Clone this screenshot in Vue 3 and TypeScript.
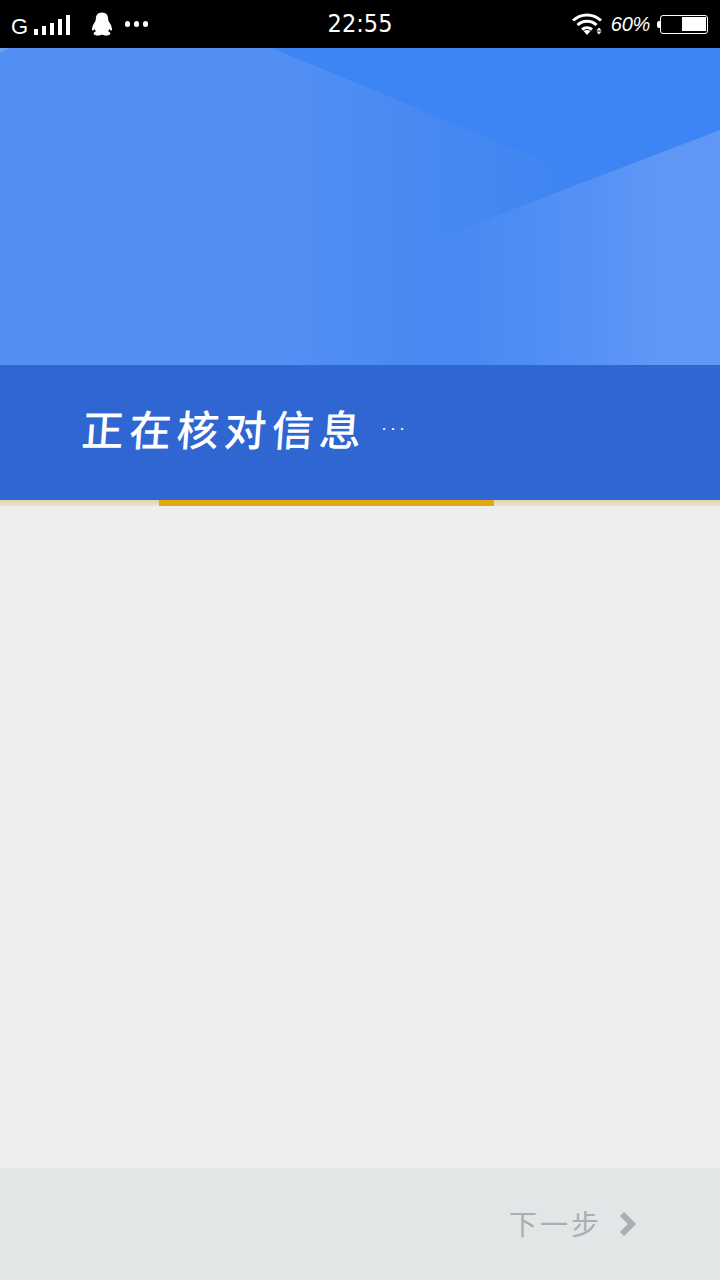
<script setup lang="ts">
const title: string = '正在核对信息'
const next: string = '下一步'
const signalBars: number[] = [6, 9, 12, 16, 20]
</script>

<template>
  <div class="page">
    <header class="status">
      <div class="status-left">
        <span class="net">G</span>
        <span class="bars">
          <i v-for="h in signalBars" :key="h" class="bar" :style="{ height: h + 'px' }"></i>
        </span>
        <svg class="qq" viewBox="0 0 22 24" width="22" height="24">
          <path fill="#fff" d="M11 .5C7 .5 4.800 3.300 4.800 7c0 1.300-.4 2.200-1.200 3.400C2.300 12.400 1 15 1 17.300c0 1.200.6 1.500 1.200 1.100.5-.3.900-.8 1.400-1.500.3.900.8 1.700 1.400 2.400C3.300 20 2.300 20.800 2.700 22c.4 1.200 3.600 1.800 5.600 1.400 1.100-.2 1.800-.7 2.700-.7s1.600.5 2.700.7c2 .4 5.200-.2 5.600-1.400.4-1.200-.6-2-2.300-2.700.6-.7 1.100-1.500 1.400-2.400.5.700.9 1.200 1.400 1.500.6.400 1.200.1 1.200-1.100 0-2.300-1.300-4.900-2.600-6.900-.8-1.200-1.200-2.100-1.200-3.400C17.200 3.300 15 .5 11 .5z"/>
        </svg>
        <span class="dots"><i></i><i></i><i></i></span>
      </div>
      <div class="clock">22:55</div>
      <div class="status-right">
        <svg class="wifi" viewBox="0 0 34 24" width="34" height="24">
          <path fill="none" stroke="#fff" stroke-width="3" d="M2 9.500C10 2 22 2 30 9.500M6.500 14C12 9 20 9 25.500 14M11 18.500c3-2.500 7-2.500 10 0"/>
          <path fill="#fff" d="M16 24l-3.500-4c2-1.300 5-1.300 7 0zM28 16.500l2.500 3h-5zM25.500 20.500h5l-2.500 3z"/>
        </svg>
        <span class="pct">60%</span>
        <span class="nub"></span>
        <span class="battery"><span class="charge"></span></span>
      </div>
    </header>

    <section class="hero">
      <svg class="art" viewBox="0 0 720 317" width="720" height="317" preserveAspectRatio="none">
        <defs>
          <linearGradient id="baseGrad" gradientUnits="userSpaceOnUse" x1="0" y1="0" x2="720" y2="0">
            <stop offset="0" stop-color="#528ff3"/>
            <stop offset="0.4" stop-color="#528ff3"/>
            <stop offset="0.64" stop-color="#4588f1"/>
            <stop offset="0.82" stop-color="#3e85f2"/>
            <stop offset="1" stop-color="#3e85f2"/>
          </linearGradient>
          <linearGradient id="lightGrad" gradientUnits="userSpaceOnUse" x1="430" y1="0" x2="650" y2="0">
            <stop offset="0" stop-color="#5e97f6" stop-opacity="0"/>
            <stop offset="1" stop-color="#5e97f6"/>
          </linearGradient>
        </defs>
        <rect width="720" height="317" fill="url(#baseGrad)"/>
        <polygon points="272,0 720,0 720,82 590,132" fill="#3d85f4"/>
        <polygon points="720,82 720,317 380,317 420,197" fill="url(#lightGrad)"/>
        <polygon points="0,0 10,0 0,5" fill="#6c9fef"/>
      </svg>
      <div class="banner">
        <h1 class="title">{{ title }}</h1>
        <span class="ellipsis">···</span>
      </div>
    </section>

    <div class="progress"><div class="progress-fill"></div></div>

    <main class="body"></main>

    <footer class="footer">
      <span class="next">{{ next }}</span>
      <svg class="chev" viewBox="0 0 18 26" width="18" height="26">
        <path fill="none" stroke="#a9afb0" stroke-width="6" d="M3 3l10 10L3 23"/>
      </svg>
    </footer>
  </div>
</template>

<style scoped>
.page {
  width: 720px;
  height: 1280px;
  display: flex;
  flex-direction: column;
  background: #eeeeee;
  font-family: "Noto Sans CJK SC", "Liberation Sans", sans-serif;
  overflow: hidden;
}
.status {
  flex: none;
  height: 48px;
  background: #000;
  color: #fff;
  display: grid;
  grid-template-columns: 1fr auto 1fr;
  align-items: center;
}
.status-left {
  display: flex;
  align-items: center;
  padding-left: 11px;
}
.net {
  font: 22px/24px "Liberation Sans", sans-serif;
  margin-top: 5px;
}
.bars {
  display: flex;
  align-items: flex-end;
  gap: 4.500px;
  margin-left: 6px;
  height: 20px;
  margin-top: 1px;
}
.bar {
  display: block;
  width: 3.500px;
  background: #fff;
}
.qq {
  margin-left: 21px;
}
.dots {
  display: flex;
  gap: 3.500px;
  margin-left: 12px;
}
.dots i {
  display: block;
  width: 5.500px;
  height: 5.500px;
  border-radius: 50%;
  background: #fff;
}
.clock {
  font: 25px/30px "DejaVu Sans", sans-serif;
  transform: scaleX(0.9);
  margin-top: -1px;
}
.status-right {
  display: flex;
  align-items: center;
  justify-content: flex-end;
  padding-right: 12px;
}
.wifi {
  margin-top: -2px;
}
.pct {
  font: italic 20px/26px "Liberation Sans", sans-serif;
  margin-left: 6px;
  letter-spacing: -0.3px;
}
.nub {
  width: 3px;
  height: 7px;
  margin-left: 7px;
  background: #fff;
  border-radius: 2px 0 0 2px;
}
.battery {
  box-sizing: border-box;
  width: 48px;
  height: 19px;
  border: 1.500px solid #fff;
  border-radius: 3px;
  padding: 1.500px;
  display: flex;
  justify-content: flex-end;
}
.charge {
  display: block;
  width: 24px;
  background: #fff;
}
.hero {
  flex: none;
}
.art {
  display: block;
}
.banner {
  box-sizing: border-box;
  height: 135px;
  background: #2f66d2;
  display: flex;
  align-items: center;
  padding: 0 0 10px 82px;
  color: #fff;
}
.title {
  margin: 0;
  font-size: 42px;
  line-height: 56px;
  font-weight: 500;
  letter-spacing: 5.500px;
  transform: skewX(-4deg);
}
.ellipsis {
  font: 18px/16px "Liberation Sans", sans-serif;
  margin-left: 14px;
  margin-top: 0;
  letter-spacing: 3px;
}
.progress {
  flex: none;
  height: 6px;
  background: linear-gradient(#dfd3a8, #ebe6d2);
  padding-left: 159px;
}
.progress-fill {
  width: 335px;
  height: 6px;
  background: #e3a70f;
}
.body {
  flex: 1;
  background: #eeeeee;
}
.footer {
  flex: none;
  height: 112px;
  background: #e2e6e7;
  display: flex;
  align-items: center;
  justify-content: flex-end;
  padding-right: 83px;
  color: #a9afb0;
}
.next {
  font-size: 28px;
  line-height: 40px;
  letter-spacing: 3px;
  margin-top: -2px;
}
.chev {
  margin-left: 17px;
}
</style>
